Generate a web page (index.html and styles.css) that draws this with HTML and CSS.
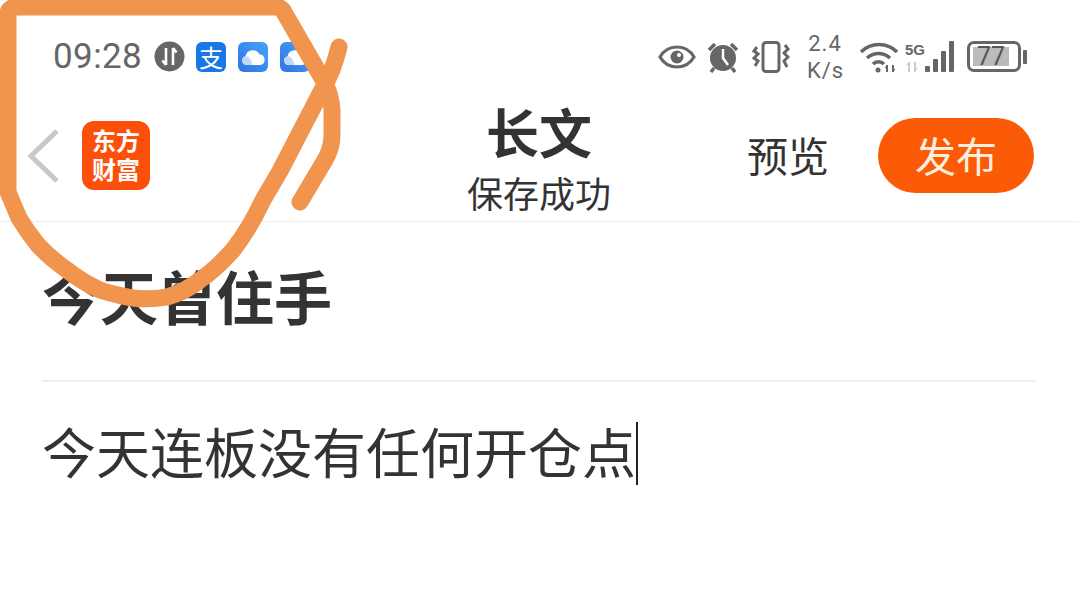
FILE: index.html
```html
<!DOCTYPE html>
<html lang="zh-CN">
<head>
    <meta charset="UTF-8">
    <meta name="viewport" content="width=device-width, initial-scale=1.0">
    <title>长文</title>
    <link rel="stylesheet" href="styles.css">
</head>
<body>
    <div class="status-bar">
        <div class="status-left">
            <span class="clock">09:28</span>
            <svg class="data-icon" width="31" height="31" viewBox="0 0 31 31">
                <circle cx="15.5" cy="15.5" r="15" fill="#666"/>
                <path d="M12 7v17M12 24l-3.5-4.5M19 24V7M19 7l3.5 4.5" stroke="#fff" stroke-width="2.6" fill="none"/>
            </svg>
            <span class="app-badge alipay">支</span>
            <svg class="app-badge" width="30" height="30" viewBox="0 0 30 30">
                <defs>
                    <linearGradient id="cloud-bg" x1="1" y1="0" x2="0" y2="1">
                        <stop offset="0" stop-color="#45a5fb"/>
                        <stop offset="1" stop-color="#3273e0"/>
                    </linearGradient>
                    <g id="cloud-badge">
                        <rect width="30" height="30" rx="6" fill="url(#cloud-bg)"/>
                        <path d="M9 23a4.500 4.500 0 0 1-1.500-8.800a7.500 7.500 0 0 1 14-2a5.500 5.500 0 0 1 1 10.800z" fill="#fff"/>
                        <path d="M9 23a4.500 4.500 0 0 1-1.500-8.800c3-.5 6 3 7 8.800z" fill="#bcd8f8"/>
                    </g>
                </defs>
                <use href="#cloud-badge"/>
            </svg>
            <svg class="app-badge" width="30" height="30" viewBox="0 0 30 30">
                <use href="#cloud-badge"/>
            </svg>
        </div>
        <div class="status-right">
            <svg width="38" height="26" viewBox="0 0 38 26">
                <path d="M2 13C6 6 12 3 19 3s13 3 17 10c-4 7-10 10-17 10S6 20 2 13z" fill="none" stroke="#666" stroke-width="3.200"/>
                <circle cx="19" cy="13" r="6.500" fill="#666"/>
                <circle cx="21" cy="11" r="2" fill="#fff"/>
            </svg>
            <svg class="alarm" width="32" height="32" viewBox="0 0 32 32">
                <circle cx="16" cy="17" r="13" fill="#666"/>
                <path d="M2 9l6-6M30 9l-6-6M7 27l-3 4M25 27l3 4" stroke="#666" stroke-width="3.500" fill="none"/>
                <path d="M16 8v9l5 7" stroke="#fff" stroke-width="2.500" fill="none"/>
            </svg>
            <svg class="vibrate" width="38" height="32" viewBox="0 0 38 32">
                <rect x="11" y="1.500" width="16" height="29" rx="3" fill="none" stroke="#666" stroke-width="3"/>
                <path d="M5 6L2 10l4 3-4 4 4 3-3 5M33 4l3 4-4 4 4 4-4 4 3 6" fill="none" stroke="#666" stroke-width="3"/>
            </svg>
            <div class="net-speed"><span>2.4</span><span>K/s</span></div>
            <svg class="wifi" width="38" height="32" viewBox="0 0 38 32">
                <path d="M1 11C11 1 27 1 37 11M7 17c7-6 16-6 23 0M13 23c3-3 8-3 11 0" fill="none" stroke="#666" stroke-width="3.500"/>
                <circle cx="18" cy="29" r="2.500" fill="#666"/>
                <path d="M27 31v-7M33 24v7" stroke="#666" stroke-width="2"/>
                <path d="M24.500 27l2.500-3v3zM35.500 28l-2.500 3v-3z" fill="#666"/>
            </svg>
            <div class="cell-block">
                <div class="cell-labels">
                    <span class="five-g">5G</span>
                    <svg width="15" height="11" viewBox="0 0 15 11">
                        <path d="M4 11V1M10 1v10" stroke="#ccc" stroke-width="2"/>
                        <path d="M1 4l3-3v3zM13 7l-3 3V7z" fill="#ccc"/>
                    </svg>
                </div>
                <div class="cell-bars">
                    <i class="bar-1"></i><i class="bar-2"></i><i class="bar-3"></i><i class="bar-4"></i>
                </div>
            </div>
            <div class="battery">
                <div class="battery-body"><div class="battery-fill">77</div></div>
                <div class="battery-cap"></div>
            </div>
        </div>
    </div>

    <div class="app-bar">
        <div class="bar-left">
            <svg class="back" width="34" height="56" viewBox="0 0 34 56">
                <path d="M31 3L5 28l26 25" fill="none" stroke="#c8c8c8" stroke-width="5"/>
            </svg>
            <div class="logo">东方<br>财富</div>
        </div>
        <div class="bar-title">
            <h1>长文</h1>
            <p>保存成功</p>
        </div>
        <div class="bar-right">
            <span class="preview">预览</span>
            <button class="publish">发布</button>
        </div>
    </div>

    <div class="editor">
        <h2 class="post-title">今天曾住手</h2>
        <div class="post-body">今天连板没有任何开仓点<span class="caret"></span></div>
    </div>

    <!-- hand drawn mark on top of the screenshot -->
    <svg class="scribble" width="1078" height="613" viewBox="0 0 1078 613">
        <path d="M339 47Q333 72 322 90L280 171L263 200Q250 228 233 250Q215 270 200 280Q185 292 167 297Q150 300 133 298Q115 295 100 290Q82 282 67 270Q50 258 38 245Q28 233 19 218L8 192V14Q8 7 18 7H276Q282 7 285 14L322 78Q331 92 332 110V135Q332 148 325 160L300 202"/>
    </svg>
</body>
</html>
```

FILE: styles.css
```css
* {
    box-sizing: border-box;
}

body {
    margin: 0;
    height: 613px;
    overflow: hidden;
    background-color: #fff;
    color: #333;
    font-family: "Noto Sans CJK SC", "Noto Sans", sans-serif;
    position: relative;
}

svg {
    display: block;
    flex: none;
}

.status-bar {
    height: 96px;
    padding: 17px 51px 0 53px;
    display: flex;
    justify-content: space-between;
    align-items: center;
    color: #666;
}

.status-left {
    display: flex;
    align-items: center;
}

.clock {
    font-family: Roboto, sans-serif;
    font-size: 35px;
    letter-spacing: 0.4px;
    width: 101px;
}

.data-icon {
    margin-right: 11px;
}

.app-badge {
    width: 30px;
    height: 30px;
    margin-right: 12px;
}

.alipay {
    background-color: #1677e5;
    border-radius: 6px;
    color: #fff;
    font-size: 24px;
    line-height: 30px;
    text-align: center;
}

.status-right {
    display: flex;
    align-items: center;
}

.alarm {
    margin-left: 11px;
}

.vibrate {
    margin-left: 13px;
}

.net-speed {
    width: 36px;
    margin-left: 17px;
    font-family: Roboto, sans-serif;
    font-size: 22px;
    letter-spacing: 1px;
    line-height: 27px;
    text-align: center;
    display: flex;
    flex-direction: column;
}

.wifi {
    margin-left: 17px;
}

.cell-block {
    margin-left: 7px;
    display: flex;
    align-items: flex-end;
}

.cell-labels {
    display: flex;
    flex-direction: column;
    gap: 3px;
}

.five-g {
    font-family: "Liberation Sans", sans-serif;
    font-weight: bold;
    font-size: 15px;
    line-height: 16px;
}

.cell-bars {
    display: flex;
    align-items: flex-end;
    gap: 3px;
}

.cell-bars i {
    display: block;
    width: 5px;
    background-color: #666;
    border-radius: 1px;
}

.cell-bars .bar-1 { height: 6px; }
.cell-bars .bar-2 { height: 13px; }
.cell-bars .bar-3 { height: 21px; }
.cell-bars .bar-4 { height: 31px; }

.battery {
    margin-left: 13px;
    display: flex;
    align-items: center;
}

.battery-body {
    width: 54px;
    height: 31px;
    border: 3px solid #666;
    border-radius: 7px;
    padding: 3px;
}

.battery-fill {
    width: 36px;
    height: 100%;
    background-color: #bbb;
    color: #555;
    font-family: Roboto, sans-serif;
    font-size: 25px;
    line-height: 19px;
    text-align: center;
}

.battery-cap {
    width: 4px;
    height: 14px;
    margin-left: 2px;
    background-color: #666;
    border-radius: 1px;
}

.app-bar {
    height: 126px;
    border-bottom: 1px solid #eee;
    padding: 0 44px 6px;
    display: grid;
    grid-template-columns: 1fr auto 1fr;
    align-items: center;
}

.bar-left {
    display: flex;
    align-items: center;
}

.back {
    margin-left: -18px;
}

.logo {
    margin-left: 22px;
    width: 68px;
    height: 69px;
    border-radius: 12px;
    background-color: #fb4f0a;
    color: #fff;
    font-size: 24px;
    font-weight: bold;
    line-height: 29px;
    text-align: center;
    padding-top: 4px;
}

.bar-title {
    padding-top: 2px;
    text-align: center;
}

.bar-title h1 {
    margin: 0;
    font-size: 53px;
    line-height: 58px;
    font-weight: bold;
}

.bar-title p {
    margin: 12px 0 0;
    font-size: 36px;
    line-height: 40px;
}

.bar-right {
    display: flex;
    justify-content: flex-end;
    align-items: center;
    gap: 49px;
}

.preview {
    font-size: 41px;
    line-height: 50px;
    margin-bottom: 4px;
}

.publish {
    width: 156px;
    height: 75px;
    border: none;
    border-radius: 38px;
    background-color: #fb5a06;
    color: #fdeedd;
    font-family: inherit;
    font-size: 41px;
    padding: 0 0 4px;
}

.editor {
    padding: 0 42px;
}

.post-title {
    margin: 0;
    height: 160px;
    padding-top: 38px;
    border-bottom: 2px solid #eee;
    font-size: 58px;
    line-height: 70px;
    font-weight: bold;
}

.post-body {
    margin-top: 34px;
    font-size: 54px;
    line-height: 70px;
    white-space: nowrap;
    display: flex;
    align-items: center;
}

.caret {
    display: block;
    width: 2px;
    height: 63px;
    margin-top: 4px;
    background-color: #222;
}

.scribble {
    position: absolute;
    top: 0;
    left: 0;
    fill: none;
    stroke: #f1944e;
    stroke-width: 17;
    stroke-linecap: round;
    stroke-linejoin: round;
}
```
